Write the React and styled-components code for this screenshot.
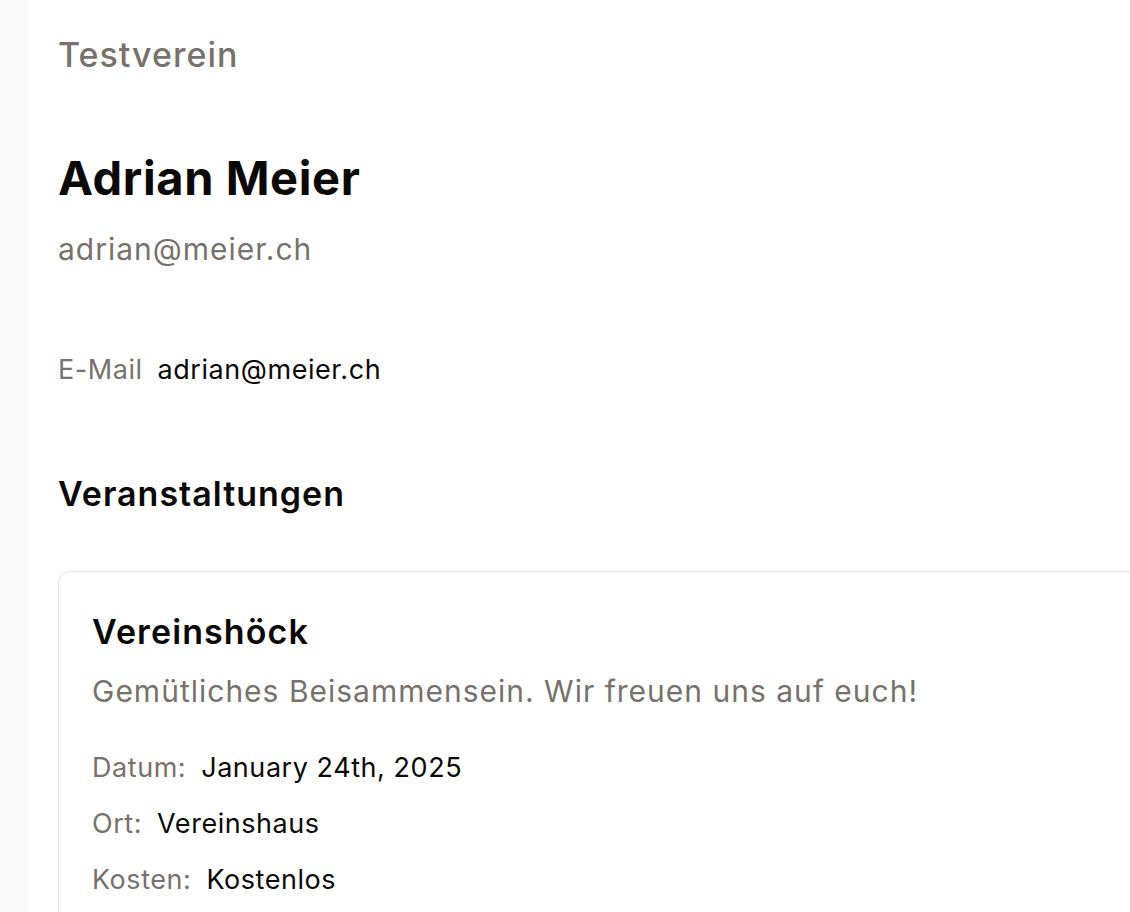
import React from "react";
import styled, { createGlobalStyle } from "styled-components";

const GlobalStyle = createGlobalStyle`
  html, body { margin: 0; padding: 0; background: #ffffff; }
  body { font-family: Inter, "Noto Sans", sans-serif; color: #0c0a09; }
  * { box-sizing: border-box; }
`;

const Layout = styled.div`
  display: flex;
  min-height: 912px;
  width: 1130px;
  overflow: hidden;
`;

const SideStrip = styled.div`
  flex: 0 0 28px;
  background: #f9f9f9;
`;

const Main = styled.main`
  flex: 1;
  padding: 29px 0 0 30px;
  display: flex;
  flex-direction: column;
  min-width: 0;
`;

const OrgName = styled.div`
  font-size: 34px;
  line-height: 52px;
  font-weight: 500;
  letter-spacing: 1px;
  color: #78716c;
`;

const PersonName = styled.h1`
  margin: 69px 0 0;
  font-size: 47px;
  line-height: 56px;
  font-weight: 700;
  letter-spacing: 0.6px;
  color: #0c0a09;
`;

const SubText = styled.div`
  margin-top: 21px;
  font-size: 30px;
  line-height: 45px;
  letter-spacing: 1px;
  color: #78716c;
`;

const InfoRow = styled.div`
  display: flex;
  align-items: baseline;
  gap: 15px;
  font-size: 27px;
  line-height: 40px;
  letter-spacing: 0.55px;
  margin-top: ${(p) => p.$top || 0}px;
`;

const Label = styled.span`
  color: #78716c;
`;

const Value = styled.span`
  color: #0c0a09;
`;

const SectionTitle = styled.h2`
  margin: 80px 0 0;
  font-size: 34px;
  line-height: 48px;
  font-weight: 600;
  letter-spacing: 1px;
  color: #0c0a09;
`;

const Card = styled.section`
  margin-top: 53px;
  margin-right: -40px;
  border: 1.5px solid #e5e5e5;
  border-radius: 12px;
  padding: 38px 33px 30px;
  display: flex;
  flex-direction: column;
  background: #ffffff;
`;

const EventTitle = styled.h3`
  margin: 0;
  font-size: 34px;
  line-height: 44px;
  font-weight: 600;
  letter-spacing: 1.1px;
  color: #0c0a09;
`;

const EventDesc = styled.p`
  margin: 16px 0 0;
  font-size: 30px;
  line-height: 42px;
  letter-spacing: 1px;
  color: #78716c;
`;

const Details = styled.div`
  margin-top: 36px;
  display: flex;
  flex-direction: column;
  gap: 16px;
`;

export default function App() {
  return (
    <>
      <GlobalStyle />
      <Layout>
        <SideStrip />
        <Main>
          <OrgName>Testverein</OrgName>
          <PersonName>Adrian Meier</PersonName>
          <SubText>adrian@meier.ch</SubText>
          <InfoRow $top={78}>
            <Label>E-Mail</Label>
            <Value>adrian@meier.ch</Value>
          </InfoRow>
          <SectionTitle>Veranstaltungen</SectionTitle>
          <Card>
            <EventTitle>Vereinshöck</EventTitle>
            <EventDesc>Gemütliches Beisammensein. Wir freuen uns auf euch!</EventDesc>
            <Details>
              <InfoRow>
                <Label>Datum:</Label>
                <Value>January 24th, 2025</Value>
              </InfoRow>
              <InfoRow>
                <Label>Ort:</Label>
                <Value>Vereinshaus</Value>
              </InfoRow>
              <InfoRow>
                <Label>Kosten:</Label>
                <Value>Kostenlos</Value>
              </InfoRow>
            </Details>
          </Card>
        </Main>
      </Layout>
    </>
  );
}
